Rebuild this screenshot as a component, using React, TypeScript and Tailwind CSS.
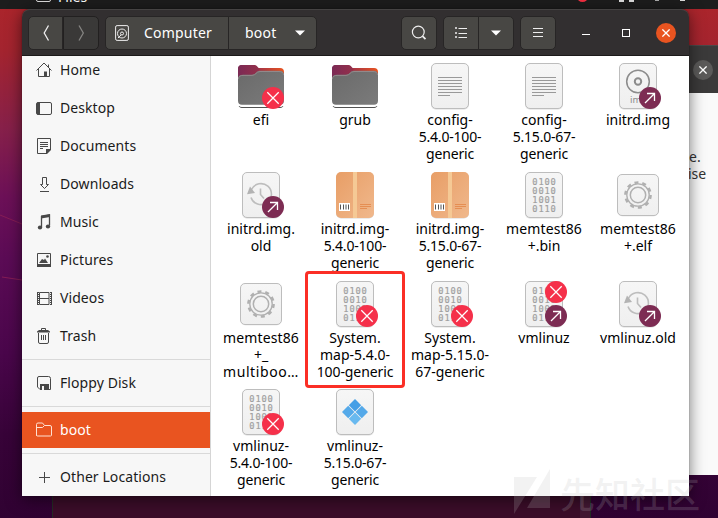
import React from "react";

type Emblem = "locked" | "link";
type Kind = "folder" | "text" | "disc" | "backup" | "package" | "binary" | "gear" | "windows";

interface FileItem {
  kind: Kind;
  lines: string[];
  emblems?: Emblem[];
  marked?: boolean;
}

const files: FileItem[] = [
  { kind: "folder", lines: ["efi"], emblems: ["locked"] },
  { kind: "folder", lines: ["grub"] },
  { kind: "text", lines: ["config-", "5.4.0-100-", "generic"] },
  { kind: "text", lines: ["config-", "5.15.0-67-", "generic"] },
  { kind: "disc", lines: ["initrd.img"], emblems: ["link"] },
  { kind: "backup", lines: ["initrd.img.", "old"], emblems: ["link"] },
  { kind: "package", lines: ["initrd.img-", "5.4.0-100-", "generic"] },
  { kind: "package", lines: ["initrd.img-", "5.15.0-67-", "generic"] },
  { kind: "binary", lines: ["memtest86", "+.bin"] },
  { kind: "gear", lines: ["memtest86", "+.elf"] },
  { kind: "gear", lines: ["memtest86", "+_", "multiboo…"] },
  { kind: "binary", lines: ["System.", "map-5.4.0-", "100-generic"], emblems: ["locked"], marked: true },
  { kind: "binary", lines: ["System.", "map-5.15.0-", "67-generic"], emblems: ["locked"] },
  { kind: "binary", lines: ["vmlinuz"], emblems: ["link", "locked"] },
  { kind: "backup", lines: ["vmlinuz.old"], emblems: ["link"] },
  { kind: "binary", lines: ["vmlinuz-", "5.4.0-100-", "generic"], emblems: ["locked"] },
  { kind: "windows", lines: ["vmlinuz-", "5.15.0-67-", "generic"] },
];

// Letter spacing for the label lines whose natural width is off
const tracking: Record<string, string> = {
  "5.4.0-100-": "tracking-[-0.200px]",
  "5.15.0-67-": "tracking-[-0.200px]",
  "100-generic": "tracking-[-0.100px]",
  generic: "tracking-[-0.150px]",
  "multiboo…": "tracking-[0.600px]",
  memtest86: "tracking-[0.120px]",
};

function Sheet() {
  return (
    <>
      <rect x="5" y="1.8" width="38" height="46" rx="5" fill="#00000018" />
      <rect x="5.5" y="1.5" width="37" height="45" rx="4.5" fill="url(#paper)" stroke="#bdbdbd" />
    </>
  );
}

function FileIcon({ kind }: { kind: Kind }) {
  return (
    <svg width="48" height="48" viewBox="0 0 48 48" className="block">
      <defs>
        <linearGradient id="paper" x1="0" y1="0" x2="0" y2="1">
          <stop offset="0" stopColor="#f6f6f6" />
          <stop offset="1" stopColor="#efefef" />
        </linearGradient>
        <linearGradient id="back" x1="0" y1="0" x2="1" y2="0">
          <stop offset="0" stopColor="#772953" />
          <stop offset="0.45" stopColor="#a63446" />
          <stop offset="1" stopColor="#e95420" />
        </linearGradient>
        <linearGradient id="tab" x1="0" y1="0" x2="1" y2="0">
          <stop offset="0" stopColor="#7b2a55" />
          <stop offset="1" stopColor="#95304a" />
        </linearGradient>
        <linearGradient id="front" x1="0" y1="0" x2="1" y2="1">
          <stop offset="0" stopColor="#6a6a6a" />
          <stop offset="1" stopColor="#7b7b7b" />
        </linearGradient>
        <linearGradient id="box" x1="0" y1="0" x2="1" y2="1">
          <stop offset="0" stopColor="#e89e66" />
          <stop offset="1" stopColor="#f0b88c" />
        </linearGradient>
      </defs>
      {kind === "folder" && (
        <>
          <path d="M1 14V7a4 4 0 0 1 4-4h12c2 0 2.500 3 5 3h21a4 4 0 0 1 4 4v8H1z" fill="url(#back)" />
          <path d="M1 17V7a4 4 0 0 1 4-4h12c2.500 0 3 1 4 2.500 1 1.500 1.800 2 1.800 2l-4 4.500c-1 1-2 1.500-4 1.500H6c-3 0-5 1-5 4z" fill="url(#tab)" />
          <path d="M1 18c0-3 2-4 5-4h9c4 0 4-4 8-4h19c3 0 5 1 5 4v27a4 4 0 0 1-4 4H5a4 4 0 0 1-4-4z" fill="url(#front)" transform="translate(0 -.9) scale(1 .97)" />
          <path d="M1.500 16.800c0-2.500 2-3.400 4.500-3.400h9c4 0 4-3.900 8-3.900h19c2.700 0 4.500 1 4.500 3.600" fill="none" stroke="#92898b" />
          <path d="M2 44c.6 1 1.500 1.500 3 1.500h38c1.500 0 2.500-.5 3-1.500" fill="none" stroke="#535353" />
        </>
      )}
      {(kind === "text" || kind === "disc" || kind === "backup" || kind === "binary" || kind === "windows") && <Sheet />}
      {kind === "text" && (
        <path d="M12 15.500h24M12 18.500h24M12 21.500h24M12 24.500h24M12 27.500h24M12 30.500h24M12 33.500h12" stroke="#999" />
      )}
      {kind === "disc" && (
        <>
          <g fill="none" stroke="#8c8c8c" strokeWidth="1.500">
            <circle cx="24" cy="19.500" r="11.300" />
            <circle cx="24" cy="19.500" r="3.200" strokeWidth="2" />
          </g>
          <text x="16" y="41" fontSize="9.500" fontFamily="Noto Sans, sans-serif" fill="#8c8c8c">img</text>
        </>
      )}
      {kind === "backup" && (
        <g fill="none" stroke="#bdbdbd" strokeWidth="1.600">
          <path d="M14.500 18.500a10.500 10.500 0 1 1-.5 8" />
          <path d="M23.500 17.500v6l3.500 4" />
          <path d="M13 15.500l5 6.500-8 1.200z" fill="#b3b3b3" stroke="none" />
        </g>
      )}
      {kind === "binary" && (
        <g fontSize="8.700" fontFamily="DejaVu Sans Mono, Liberation Mono, monospace" fill="#a0a0a0" stroke="#a0a0a0" strokeWidth="0.200">
          <text x="12.300" y="14" textLength="23.500">0100</text>
          <text x="12.300" y="23" textLength="23.500">0010</text>
          <text x="12.300" y="32" textLength="23.500">1001</text>
          <text x="12.300" y="41" textLength="23.500">0110</text>
        </g>
      )}
      {kind === "gear" && (
        <>
          <rect x="3.500" y="3.500" width="41" height="42" rx="5" fill="#00000014" />
          <rect x="3.500" y="3.500" width="41" height="41" rx="4.500" fill="url(#paper)" stroke="#bdbdbd" />
          <g fill="none" stroke="#b0b0b0">
            <circle cx="24" cy="24" r="12.600" strokeWidth="2.500" strokeDasharray="4 3.920" />
            <circle cx="24" cy="24" r="11.200" strokeWidth="1.300" />
            <circle cx="24" cy="24" r="7.700" strokeWidth="1.500" />
          </g>
        </>
      )}
      {kind === "package" && (
        <>
          <rect x="5" y="1.500" width="38" height="46" rx="5" fill="#00000028" />
          <rect x="5" y="1" width="38" height="46" rx="5" fill="url(#box)" />
          <path d="M22 1h4v46h-4z" fill="#f5c995" />
          <path d="M8 32h11v8H8z" fill="#fff" />
          <path d="M9.500 33.500v5M12.500 33.500v5M15 33.500v5M17.500 33.500v5" stroke="#555" />
          <path d="M29 33.500h11M29 35.500h11M29 37.500h7" stroke="#e58e53" />
        </>
      )}
      {kind === "windows" && (
        <>
          <path d="M24 11l6.200 6.200-6.200 6.200-6.200-6.200z" fill="#459fe6" />
          <path d="M17.200 17.800l6.200 6.200-6.200 6.200L11 24zM30.800 17.800L37 24l-6.200 6.200-6.200-6.200z" fill="#54a9e9" />
          <path d="M24 24.600l6.200 6.200L24 37l-6.200-6.200z" fill="#69b9ef" />
        </>
      )}
    </svg>
  );
}

function EmblemIcon({ type, top }: { type: Emblem; top: boolean }) {
  return (
    <svg width="22" height="22" viewBox="0 0 22 22" className={`absolute left-[25px] ${top ? "top-px" : "top-[25px]"}`}>
      <circle cx="11" cy="11" r="11" fill={type === "locked" ? "#f5304a" : "#7d2c53"} />
      {type === "locked" ? (
        <path d="M5.300 5.300l11.400 11.400M16.700 5.300L5.300 16.700" stroke="#fff" strokeWidth="1.250" />
      ) : (
        <path d="M6 16L15.300 6.700M8 6.500h7.500V14" fill="none" stroke="#fff" strokeWidth="1.300" />
      )}
    </svg>
  );
}

function FileCell({ item }: { item: FileItem }) {
  return (
    <div className="relative flex flex-col items-center">
      <div className="relative h-12 w-12">
        <FileIcon kind={item.kind} />
        {item.emblems?.map((e, i) => <EmblemIcon key={e} type={e} top={i === 1} />)}
      </div>
      <div className="mt-px text-center text-[14px] leading-[17px] text-black">
        {item.lines.map((l) => (
          <div key={l} className={`whitespace-nowrap ${tracking[l] ?? ""}`}>{l}</div>
        ))}
      </div>
      {item.marked && (
        <div className="absolute -top-[9px] left-[-3px] h-[117px] w-[100px] rounded-[4px] border-[3px] border-[#fb2f26]" />
      )}
    </div>
  );
}

const sideIcons: Record<string, React.ReactNode> = {
  Home: (
    <>
      <path d="M.5 8.500L8 1l7.500 7.500M2.500 7v7.500h11V7M12.500 2.500V5" />
      <path d="M8 9.500h3V15H8z" fill="currentColor" stroke="none" />
    </>
  ),
  Desktop: (
    <>
      <rect x=".5" y="2.500" width="15" height="12" rx="1.500" />
      <path d="M1 2.500h3v12H1z" fill="currentColor" stroke="none" />
    </>
  ),
  Documents: (
    <>
      <path d="M14.500 11V.5h-13v15H10M4 4.500h8M4 6.500h8M4 8.500h8M4 10.500h3" />
      <path d="M10 11h5v1l-4 4h-1z" fill="currentColor" stroke="none" />
    </>
  ),
  Downloads: <path d="M6.500 1.500h4v7h2l-4 4-4-4h2zM4 15.500h9" />,
  Music: (
    <>
      <path d="M5.500 13V2.500l8-1.500v10.500" strokeWidth="1.300" />
      <path d="M5 1.500L14 0v3L5 4.500z" fill="currentColor" stroke="none" />
      <ellipse cx="4" cy="13.500" rx="2.200" ry="1.900" fill="currentColor" stroke="none" />
      <ellipse cx="12" cy="12.500" rx="2.200" ry="1.900" fill="currentColor" stroke="none" />
    </>
  ),
  Pictures: (
    <>
      <path d="M1.500 1.500h13v13h-13z" />
      <path d="M1 12h14v3H1zM3 11l3-4 2 1 1-1.500L12 11z" fill="currentColor" stroke="none" />
      <circle cx="11.500" cy="4.500" r="1.300" fill="currentColor" stroke="none" />
    </>
  ),
  Videos: (
    <>
      <path d="M3.500 2.500h9.500v12H3.500zM3.500 8.500h9.500" />
      <path d="M2 2v13M15 2v13" strokeWidth="2" strokeDasharray="1 1" />
      <path d="M1.500 2v13M15.500 2v13" />
    </>
  ),
  Trash: (
    <>
      <path d="M2.500 5v9a1.500 1.500 0 0 0 1.500 1.500h7a1.500 1.500 0 0 0 1.500-1.500V5M5.500 7v5M7.500 7v5M9.500 7v5M5.500 2V.5h4V2" />
      <path d="M1 4.500V3.500L3 2h9l2 1.500v1z" fill="currentColor" stroke="none" />
    </>
  ),
  "Floppy Disk": (
    <>
      <path d="M3 1.500h9.500a2 2 0 0 1 2 2v11H4l-2.500-2.500V3A1.500 1.500 0 0 1 3 1.500z" />
      <path d="M4 9h9v6H4z" fill="currentColor" stroke="none" />
      <path d="M6 11h2v4H6z" fill="#f7f7f7" stroke="none" />
    </>
  ),
  boot: <path d="M.5 13.500v-11A1.500 1.500 0 0 1 2 1h4.500l2 2.500H14a1.500 1.500 0 0 1 1.500 1.500v8.500A1 1 0 0 1 14.500 14h-13a1 1 0 0 1-1-1zM.5 5.500h6l2-2" />,
  "Other Locations": <path d="M8.500 3v11M3 8.500h11" />,
};

function SideRow({ name, active = false }: { name: string; active?: boolean }) {
  return (
    <div className={`my-px flex h-9 shrink-0 items-center gap-2 pl-[14px] ${active ? "bg-[#e95420] text-white" : "text-[#1b1b1b]"}`}>
      <svg width="16" height="16" viewBox="0 0 16 16" fill="none" stroke="currentColor" className={active ? "text-[#ffe0d2]" : "text-[#484848]"}>
        {sideIcons[name]}
      </svg>
      <span className="pb-px text-[14px] leading-[18px] tracking-[0.080px]">{name}</span>
    </div>
  );
}

function Divider() {
  return <div className="my-1 h-px shrink-0 bg-[#d9d9d9]" />;
}

const button = "flex h-[34px] items-center border border-[#272525] bg-[#484744] text-white";

function Header() {
  return (
    <header className="flex h-[47px] shrink-0 items-center rounded-t-[8px] border-t border-b border-t-[#454343] border-b-[#1c1a1a] bg-[#322f30] pl-[6px] text-[14px] text-white">
      <div className="flex">
        <div className={`${button} w-[35px] justify-center rounded-l-[5px]`}>
          <svg width="16" height="18" viewBox="0 0 16 18" fill="none" stroke="#eee" strokeWidth="1.300"><path d="M10.500 1.500L6.200 9l4.300 7.500" /></svg>
        </div>
        <div className="flex h-[34px] w-9 items-center justify-center rounded-r-[5px] border border-[#222020] bg-[#3a3938]">
          <svg width="16" height="18" viewBox="0 0 16 18" fill="none" stroke="#858482" strokeWidth="1.300"><path d="M6 1.500L10.300 9 6 16.500" /></svg>
        </div>
      </div>
      <div className="ml-[6px] flex">
        <div className={`${button} w-[124px] gap-[15px] rounded-l-[5px] pl-[9px]`}>
          <svg width="14" height="16" viewBox="0 0 14 16" fill="none" stroke="#eee">
            <rect x=".6" y=".6" width="12.800" height="14.800" rx="1.500" />
            <circle cx="7" cy="8.500" r="4.500" />
            <circle cx="7" cy="8.500" r="1.500" />
            <path d="M3 13l3-3" />
          </svg>
          <span className="pb-px tracking-[0.200px]">Computer</span>
        </div>
        <div className={`${button} -ml-px w-[89px] rounded-r-[5px] pl-4`}>
          <span className="pb-px tracking-[0.200px]">boot</span>
          <svg width="10" height="6" viewBox="0 0 10 6" className="ml-auto mr-[11px]"><path d="M0 .5h10L5 5.500z" fill="#fff" /></svg>
        </div>
      </div>
      <div className={`${button} ml-[84px] w-9 justify-center rounded-[5px]`}>
        <svg width="16" height="16" viewBox="0 0 16 16" fill="none" stroke="#eee" strokeWidth="1.200"><circle cx="7.300" cy="7" r="5.900" /><path d="M11.500 11.200l3 3" strokeWidth="1.800" /></svg>
      </div>
      <div className="ml-[6px] flex">
        <div className={`${button} w-9 justify-center rounded-l-[5px]`}>
          <svg width="14" height="14" viewBox="0 0 14 14" fill="none" stroke="#eee"><path d="M4.500 2.500H13M4.500 7.500H13M4.500 11.500H13M1.500 1.500h1v1h-1zM1.500 6.500h1v1h-1zM1.500 10.500h1v1h-1z" /></svg>
        </div>
        <div className={`${button} -ml-px w-9 justify-center rounded-r-[5px]`}>
          <svg width="10" height="6" viewBox="0 0 10 6"><path d="M0 .5h10L5 5.500z" fill="#fff" /></svg>
        </div>
      </div>
      <div className={`${button} ml-[6px] w-9 justify-center rounded-[5px]`}>
        <svg width="10" height="12" viewBox="0 0 10 12" stroke="#eee"><path d="M0 1.500h10M0 5.500h10M0 9.500h10" /></svg>
      </div>
      <div className="ml-[26px] mt-[3px] h-px w-2 bg-white" />
      <div className="ml-8 h-2 w-2 border border-white" />
      <div className="ml-[26px] flex h-5 w-5 items-center justify-center rounded-full bg-[#e95420]">
        <svg width="8" height="8" viewBox="0 0 8 8" stroke="#fff" strokeWidth="1.300"><path d="M.4.4l7.200 7.200M7.600.4L.4 7.600" /></svg>
      </div>
    </header>
  );
}

export default function App() {
  return (
    <div className="relative h-[518px] w-[718px] overflow-hidden bg-[linear-gradient(180deg,#ac252b_0%,#a3242f_10%,#86204a_25%,#6c1057_38%,#5b0b55_50%,#4a064b_68%,#370338_84%,#300232_100%)] font-['Noto_Sans',sans-serif]">
      <svg width="22" height="518" className="absolute top-0 left-0" fill="none" stroke="#861d55">
        <path d="M0 215l22 9M2 277l20 3" />
      </svg>

      {/* Desktop panel */}
      <div className="absolute inset-x-0 top-0 h-[9px] overflow-hidden bg-[#1d1d1d] text-white">
        <div className="absolute top-[-12px] left-[36px] h-[14px] w-[15px] rounded-[2px] border border-[#ddd]" />
        <span className="absolute top-[-12px] left-[58px] text-[14px] leading-[18px]">Files</span>
        <div className="absolute top-[-9px] left-[577px] h-[11px] w-[11px] rounded-full bg-[#f52f41]" />
        <div className="absolute top-0 left-[619px] h-[2px] w-[5px] bg-[#ddd]" />
        <div className="absolute top-0 left-[629px] h-[2px] w-[5px] bg-[#ddd]" />
        <div className="absolute top-0 left-[655px] h-px w-1 bg-[#aaa]" />
        <div className="absolute top-0 left-[680px] h-px w-[5px] bg-[#ddd]" />
      </div>

      {/* Terminal behind the file manager */}
      <div className="absolute top-[400px] left-[52px] h-[118px] w-[539px] border-x border-[#252b24] bg-[#3b0d29]">
        <div className="ml-auto h-full w-[10px] bg-[#431833]" />
      </div>

      {/* Dialog behind the file manager */}
      <div className="absolute top-[45px] left-[600px] flex h-[430px] w-[140px] flex-col bg-[#fafafa]">
        <div className="flex h-12 shrink-0 items-center border-t border-[#4b4949] bg-[#3b3a3a] pl-[93px]">
          <div className="flex h-5 w-5 items-center justify-center rounded-full bg-[#5b5a59]">
            <svg width="8" height="8" viewBox="0 0 8 8" stroke="#fff" strokeWidth="1.300"><path d="M.4.4l7.200 7.200M7.600.4L.4 7.600" /></svg>
          </div>
        </div>
        <div className="pt-[55px] pl-[89px] text-[14px] leading-[17px] text-[#333]">
          <div>e.</div>
          <div className="-ml-px">ise</div>
        </div>
      </div>

      {/* File manager */}
      <div className="absolute top-[9px] left-[22px] flex h-[487px] w-[667px] flex-col rounded-t-[8px] shadow-[0_3px_16px_rgba(0,0,0,0.55),0_0_1px_rgba(0,0,0,0.7)]">
        <Header />
        <div className="flex min-h-0 flex-1">
          <nav className="flex w-[189px] shrink-0 flex-col overflow-hidden border-r border-[#d5d5d5] bg-[#f7f7f7]">
            <div className="-mt-[5px] flex flex-col">
              {["Home", "Desktop", "Documents", "Downloads", "Music", "Pictures", "Videos", "Trash"].map((n) => (
                <SideRow key={n} name={n} />
              ))}
              <Divider />
              <SideRow name="Floppy Disk" />
              <Divider />
              <SideRow name="boot" active />
              <Divider />
              <SideRow name="Other Locations" />
            </div>
          </nav>
          <main className="grid flex-1 grid-cols-[94px_94px_96px_92px_96px] grid-rows-[109px_109px_108px_107px] overflow-hidden bg-white pt-[6px] pl-[3px]">
            {files.map((f, i) => <FileCell key={i} item={f} />)}
          </main>
        </div>
      </div>

      {/* Watermark */}
      <div className="absolute top-[469px] left-[514px] flex text-[#bcbcbc]/20">
        <svg width="36" height="46" viewBox="0 0 36 46" fill="currentColor"><path d="M0 8h23L0 45zM36 0v39H13z" /></svg>
        <span className="ml-[10px] font-['Noto_Sans_CJK_SC',sans-serif] text-[35px] leading-[48px] font-medium">先知社区</span>
      </div>
    </div>
  );
}
